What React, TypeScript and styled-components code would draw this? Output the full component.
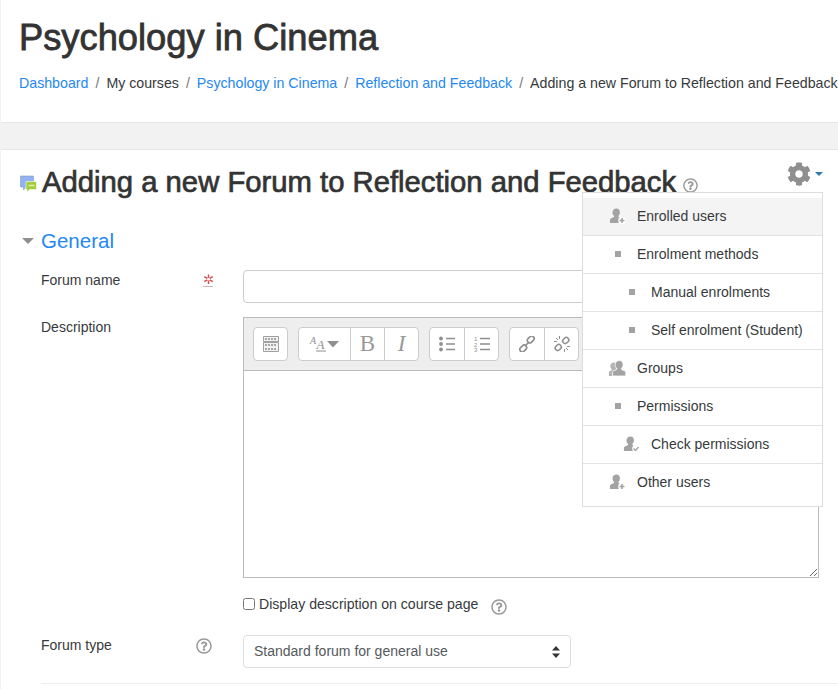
import React from 'react'
import styled, { createGlobalStyle } from 'styled-components'
import { FaCog, FaRegQuestionCircle } from 'react-icons/fa'

const GlobalStyle = createGlobalStyle`
  html, body {
    margin: 0;
    height: 689px;
    overflow: hidden;
    background: #f2f2f2;
    font-family: "Liberation Sans", Arial, sans-serif;
    font-size: 14px;
    color: #373a3c;
  }
`

const crumbs = [
  { label: 'Dashboard', link: true },
  { label: 'My courses', link: false },
  { label: 'Psychology in Cinema', link: true },
  { label: 'Reflection and Feedback', link: true },
  { label: 'Adding a new Forum to Reflection and Feedback', link: false },
]

type IconKind = 'enrol' | 'dot' | 'groups' | 'check' | 'other'

const menuItems: { label: string; icon: IconKind; nested?: boolean; active?: boolean }[] = [
  { label: 'Enrolled users', icon: 'enrol', active: true },
  { label: 'Enrolment methods', icon: 'dot' },
  { label: 'Manual enrolments', icon: 'dot', nested: true },
  { label: 'Self enrolment (Student)', icon: 'dot', nested: true },
  { label: 'Groups', icon: 'groups' },
  { label: 'Permissions', icon: 'dot' },
  { label: 'Check permissions', icon: 'check', nested: true },
  { label: 'Other users', icon: 'other' },
]

const USER_PATH =
  'M8 0.5c2.3 0 3.6 1.7 3.6 3.9 0 1.7-.7 3.2-1.7 4 0 .8.3 1.2 1.2 1.6 1.6.6 2.9 1.2 3.2 2.4V16H1v-3.6c.3-1.2 1.6-1.8 3.2-2.4.9-.4 1.2-.8 1.2-1.6-1-.8-1.7-2.3-1.7-4C3.7 2.2 5.7.5 8 .5z'

const MenuIcon = ({ kind }: { kind: IconKind }) => {
  if (kind === 'dot') return <Dot />
  if (kind === 'groups') {
    return (
      <svg width="17" height="16" viewBox="0 0 17 16">
        <path d={USER_PATH} fill="#b5b5b5" transform="translate(-2 2) scale(.88)" />
        <path d={USER_PATH} fill="#a3a3a3" stroke="#fff" strokeWidth=".8" transform="translate(2.500 0)" />
      </svg>
    )
  }
  return (
    <svg width="17" height="16" viewBox="0 0 17 16">
      <path d={USER_PATH} fill="#a3a3a3" transform="scale(.94)" />
      <circle cx="13" cy="12.500" r="3.800" fill="#fff" />
      {kind === 'check' ? (
        <path d="M10.500 12.500l2 2 3-3.500" fill="none" stroke="#a3a3a3" strokeWidth="1.300" />
      ) : (
        <path d="M13 10v5M10.500 12.500h5" fill="none" stroke="#a3a3a3" strokeWidth="1.600" />
      )}
    </svg>
  )
}

const ForumIcon = () => (
  <svg width="17" height="18" viewBox="0 0 17 18">
    <path d="M0.500 1h13v11H6l-2.500 3v-3h-3z" fill="#93b3ee" stroke="#7b9ddc" strokeWidth=".6" />
    <path d="M6 6.500h10.500v8h-7l-2.500 3v-3H6z" fill="#a4cc3c" stroke="#fff" strokeWidth=".6" />
    <path d="M8.500 10.500h6" stroke="#dcefa8" strokeWidth="1.500" />
  </svg>
)

const RequiredIcon = () => (
  <svg width="11" height="14" viewBox="0 0 11 14">
    <path
      d="M5.500 .5v9.500M1.300 2.700l8.400 5M9.700 2.700l-8.400 5"
      stroke="#e0464a"
      strokeWidth="1.400"
      fill="none"
    />
    <circle cx="5.500" cy="5.200" r="1.400" fill="#fff" />
    <path d="M.5 12.500h10" stroke="#8a6a6a" strokeWidth="1" strokeDasharray="1 1" />
  </svg>
)

const SinkIcon = () => (
  <svg width="16" height="16" viewBox="0 0 16 16">
    <path d="M.5.500h15v5H.5zM.5 6.500h15v9H.5z" fill="#f2f2f2" stroke="#a0a0a0" />
    <path
      d="M2 3h12M2 9h12M2 13h12"
      stroke="#8f8f8f"
      strokeWidth="1.500"
      strokeDasharray="2 1"
    />
  </svg>
)

const FontSizeIcon = () => (
  <svg width="32" height="18" viewBox="0 0 32 18">
    <text x="1" y="9" fontSize="10" fontStyle="italic" fontFamily="Liberation Serif, serif" fill="#8f8f8f">A</text>
    <text x="7.500" y="14" fontSize="13" fontStyle="italic" fontFamily="Liberation Serif, serif" fill="#8f8f8f">A</text>
    <path d="M7 16h10" stroke="#8f8f8f" />
    <path d="M18 6h12l-6 6.500z" fill="#8f8f8f" />
  </svg>
)

const BulletIcon = () => (
  <svg width="16" height="16" viewBox="0 0 16 16">
    <circle cx="2" cy="2.500" r="1.900" fill="#8f8f8f" />
    <circle cx="2" cy="8" r="1.900" fill="#8f8f8f" />
    <circle cx="2" cy="13.500" r="1.900" fill="#8f8f8f" />
    <path d="M7 2.500h9M7 8h9M7 13.500h9" stroke="#8f8f8f" strokeWidth="1.600" />
  </svg>
)

const NumberIcon = () => (
  <svg width="16" height="16" viewBox="0 0 16 16">
    <text x="0" y="5" fontSize="6" fontFamily="Liberation Sans, sans-serif" fill="#8f8f8f">1</text>
    <text x="0" y="10.500" fontSize="6" fontFamily="Liberation Sans, sans-serif" fill="#8f8f8f">2</text>
    <text x="0" y="16" fontSize="6" fontFamily="Liberation Sans, sans-serif" fill="#8f8f8f">3</text>
    <path d="M6 2.500h10M6 8h10M6 13.500h10" stroke="#8f8f8f" strokeWidth="1.600" />
  </svg>
)

const LinkIcon = () => (
  <svg width="16" height="16" viewBox="0 0 16 16" fill="none" stroke="#8f8f8f" strokeWidth="1.600">
    <rect x="8" y="1" width="7.500" height="5" rx="2.500" transform="rotate(-45 11.700 3.500)" />
    <rect x=".5" y="10" width="7.500" height="5" rx="2.500" transform="rotate(-45 4.200 12.500)" />
    <path d="M6 10l4-4" />
  </svg>
)

const UnlinkIcon = () => (
  <svg width="18" height="18" viewBox="0 0 18 18" fill="none" stroke="#8f8f8f" strokeWidth="1.500">
    <rect x="9.500" y="3" width="6.500" height="5" rx="2.500" transform="rotate(-45 12.700 5.500)" />
    <rect x="2" y="10" width="6.500" height="5" rx="2.500" transform="rotate(-45 5.200 12.500)" />
    <path d="M6.500 1v3M1 6.500h3M11.500 17v-3M17 11.500h-3M3 3l2 2M15 15l-2-2" strokeWidth="1" />
  </svg>
)

export default function App() {
  return (
    <Page>
      <GlobalStyle />
      <HeaderCard>
        <PageTitle>Psychology in Cinema</PageTitle>
        <Breadcrumb>
          {crumbs.map((c, i) => (
            <React.Fragment key={c.label}>
              {i > 0 && <Slash>/</Slash>}
              {c.link ? <CrumbLink href="#">{c.label}</CrumbLink> : <span>{c.label}</span>}
            </React.Fragment>
          ))}
        </Breadcrumb>
      </HeaderCard>

      <MainCard>
        <HeadingRow>
          <ForumIcon />
          <Heading>Adding a new Forum to Reflection and Feedback</Heading>
          <Help $size={15} />
        </HeadingRow>

        <SettingsToggle>
          <FaCog size={24} color="#8f8f8f" />
          <ToggleCaret />
        </SettingsToggle>

        <SettingsMenu>
          {menuItems.map(item => (
            <MenuRow key={item.label} $nested={item.nested} $active={item.active}>
              <MenuIconSlot>
                <MenuIcon kind={item.icon} />
              </MenuIconSlot>
              {item.label}
            </MenuRow>
          ))}
        </SettingsMenu>

        <SectionTitle>
          <SectionCaret />
          <SectionLink href="#">General</SectionLink>
        </SectionTitle>

        <FormRow>
          <LabelCell>
            Forum name
            <RequiredSlot>
              <RequiredIcon />
            </RequiredSlot>
          </LabelCell>
          <TextInput type="text" />
        </FormRow>

        <FormRow>
          <LabelCell>Description</LabelCell>
          <Editor>
            <Toolbar>
              <BtnGroup>
                <ToolBtn $w={33}><SinkIcon /></ToolBtn>
              </BtnGroup>
              <BtnGroup>
                <ToolBtn $w={51}><FontSizeIcon /></ToolBtn>
                <ToolBtn><SerifGlyph>B</SerifGlyph></ToolBtn>
                <ToolBtn><SerifGlyph $italic>I</SerifGlyph></ToolBtn>
              </BtnGroup>
              <BtnGroup>
                <ToolBtn><BulletIcon /></ToolBtn>
                <ToolBtn><NumberIcon /></ToolBtn>
              </BtnGroup>
              <BtnGroup>
                <ToolBtn><LinkIcon /></ToolBtn>
                <ToolBtn><UnlinkIcon /></ToolBtn>
              </BtnGroup>
            </Toolbar>
            <EditorArea />
          </Editor>
        </FormRow>

        <CheckRow>
          <Spacer />
          <CheckLabel>
            <CheckBox type="checkbox" />
            Display description on course page
            <Help $size={16} $gap={13} />
          </CheckLabel>
        </CheckRow>

        <FormRow $last>
          <LabelCell>
            Forum type
            <HelpSlot>
              <Help $size={16} />
            </HelpSlot>
          </LabelCell>
          <SelectWrap>
            <Select defaultValue="general">
              <option value="general">Standard forum for general use</option>
            </Select>
            <SelectArrows viewBox="0 0 8 12">
              <path d="M4 0l4 4.500H0zM4 12L0 7.500h8z" fill="#333" />
            </SelectArrows>
          </SelectWrap>
        </FormRow>

        <Divider />
      </MainCard>
    </Page>
  )
}

const Page = styled.div`
  padding-left: 1px;
  width: 837px;
  overflow: hidden;
`

const HeaderCard = styled.header`
  background: #fff;
  border-bottom: 1px solid #e6e6e6;
  height: 123px;
  box-sizing: border-box;
  padding: 16px 0 0 18px;
  margin-bottom: 26px;
`

const PageTitle = styled.h1`
  margin: 0;
  font-size: 36.3px;
  line-height: 44px;
  font-weight: 400;
  -webkit-text-stroke: 0.8px #333;
  color: #333;
`

const Breadcrumb = styled.nav`
  margin-top: 14px;
  font-size: 14.2px;
  line-height: 18px;
  white-space: nowrap;
  overflow: hidden;
`

const CrumbLink = styled.a`
  color: #2588f2;
  text-decoration: none;
`

const Slash = styled.span`
  color: #777;
  margin: 0 7px;
`

const MainCard = styled.main`
  position: relative;
  background: #fff;
  border-top: 1px solid #e6e6e6;
  height: 540px;
  box-sizing: border-box;
  padding: 14px 0 0 19px;
`

const HeadingRow = styled.div`
  display: flex;
  align-items: center;
  height: 36px;
  svg:first-child {
    margin-top: 3px;
    margin-right: 5px;
  }
`

const Heading = styled.h2`
  margin: 0 7px 0 0;
  font-size: 29.25px;
  line-height: 36px;
  font-weight: 400;
  -webkit-text-stroke: 0.7px #333;
  color: #333;
  white-space: nowrap;
`

const Help = styled(FaRegQuestionCircle)<{ $size: number; $gap?: number }>`
  width: ${p => p.$size}px;
  height: ${p => p.$size}px;
  color: #999;
  margin-top: 6px;
  margin-left: ${p => p.$gap ?? 0}px;
  flex: none;
`

const SettingsToggle = styled.div`
  position: absolute;
  left: 786px;
  top: 12px;
  display: flex;
  align-items: center;
  gap: 4px;
`

const ToggleCaret = styled.span`
  width: 0;
  height: 0;
  border-left: 4.5px solid transparent;
  border-right: 4.5px solid transparent;
  border-top: 4.5px solid #2a7ab8;
`

const SettingsMenu = styled.div`
  position: absolute;
  left: 581px;
  top: 42px;
  width: 241px;
  height: 315px;
  box-sizing: border-box;
  background: #fff;
  border: 1px solid #ddd;
  padding-top: 5px;
  z-index: 2;
`

const MenuRow = styled.div<{ $nested?: boolean; $active?: boolean }>`
  display: flex;
  align-items: center;
  height: 38px;
  box-sizing: border-box;
  padding: 0 0 1px ${p => (p.$nested ? 40 : 26)}px;
  background: ${p => (p.$active ? '#f4f4f4' : '#fff')};
  border-bottom: 1px solid #e3e3e3;
  &:last-child {
    border-bottom: 0;
    padding-bottom: 2px;
  }
`

const MenuIconSlot = styled.span`
  width: 28px;
  display: flex;
  align-items: center;
  justify-content: flex-start;
  height: 16px;
`

const Dot = styled.span`
  width: 6px;
  height: 6px;
  margin-left: 6px;
  background: #a3a3a3;
`

const SectionTitle = styled.div`
  display: flex;
  align-items: center;
  margin: 25px 0 13px;
  height: 32px;
`

const SectionCaret = styled.span`
  width: 0;
  height: 0;
  margin: 0 7px 0 2px;
  border-left: 6px solid transparent;
  border-right: 6px solid transparent;
  border-top: 6px solid #8f8f8f;
`

const SectionLink = styled.a`
  color: #2588f2;
  font-size: 20.5px;
  text-decoration: none;
`

const FormRow = styled.div<{ $last?: boolean }>`
  display: grid;
  grid-template-columns: 202px 1fr;
  padding-left: 21px;
  margin-bottom: ${p => (p.$last ? 15 : 14)}px;
`

const LabelCell = styled.div`
  position: relative;
  padding-top: 1px;
  line-height: 18px;
  color: #373a3c;
`

const RequiredSlot = styled.span`
  position: absolute;
  left: 162px;
  top: 4px;
`

const HelpSlot = styled.span`
  position: absolute;
  left: 155px;
  top: -3px;
`

const TextInput = styled.input`
  width: 500px;
  height: 33px;
  box-sizing: border-box;
  border: 1px solid #ccc;
  border-radius: 4px;
  outline: 0;
`

const Editor = styled.div`
  width: 576px;
  display: flex;
  flex-direction: column;
`

const Toolbar = styled.div`
  display: flex;
  gap: 10px;
  height: 54px;
  box-sizing: border-box;
  padding: 9px 0 0 9px;
  background: #eee;
  border: 1px solid #bbb;
`

const BtnGroup = styled.div`
  display: flex;
  height: 32px;
  border: 1px solid #ccc;
  border-radius: 4px;
  background: #fff;
  overflow: hidden;
`

const ToolBtn = styled.span<{ $w?: number }>`
  width: ${p => p.$w ?? 34}px;
  box-sizing: border-box;
  display: flex;
  align-items: center;
  justify-content: center;
  border-left: 1px solid #ccc;
  &:first-child {
    border-left: 0;
  }
`

const SerifGlyph = styled.span<{ $italic?: boolean }>`
  font-family: "Liberation Serif", serif;
  font-size: 23px;
  color: #999;
  font-style: ${p => (p.$italic ? 'italic' : 'normal')};
`

const EditorArea = styled.textarea`
  display: block;
  width: 576px;
  height: 207px;
  box-sizing: border-box;
  border: 1px solid #bbb;
  border-top: 0;
  margin: 0;
  resize: both;
  outline: 0;
`

const CheckRow = styled.div`
  display: grid;
  grid-template-columns: 202px 1fr;
  padding-left: 21px;
  margin-bottom: 19px;
`

const Spacer = styled.div``

const CheckLabel = styled.label`
  display: flex;
  align-items: center;
  height: 24px;
  font-size: 14.1px;
  color: #373a3c;
`

const CheckBox = styled.input`
  width: 12px;
  height: 12px;
  margin: 0 4px 0 0;
`

const SelectWrap = styled.div`
  position: relative;
  width: 328px;
`

const Select = styled.select`
  appearance: none;
  width: 100%;
  height: 33px;
  box-sizing: border-box;
  padding: 0 10px 2px;
  background: #fff;
  border: 1px solid #ddd;
  border-radius: 4px;
  font-family: inherit;
  font-size: 14px;
  color: #55595c;
`

const SelectArrows = styled.svg`
  position: absolute;
  right: 11px;
  top: 11px;
  width: 8px;
  height: 12px;
  pointer-events: none;
`

const Divider = styled.hr`
  margin: 0 0 0 21px;
  border: 0;
  border-top: 1px solid #eee;
`
